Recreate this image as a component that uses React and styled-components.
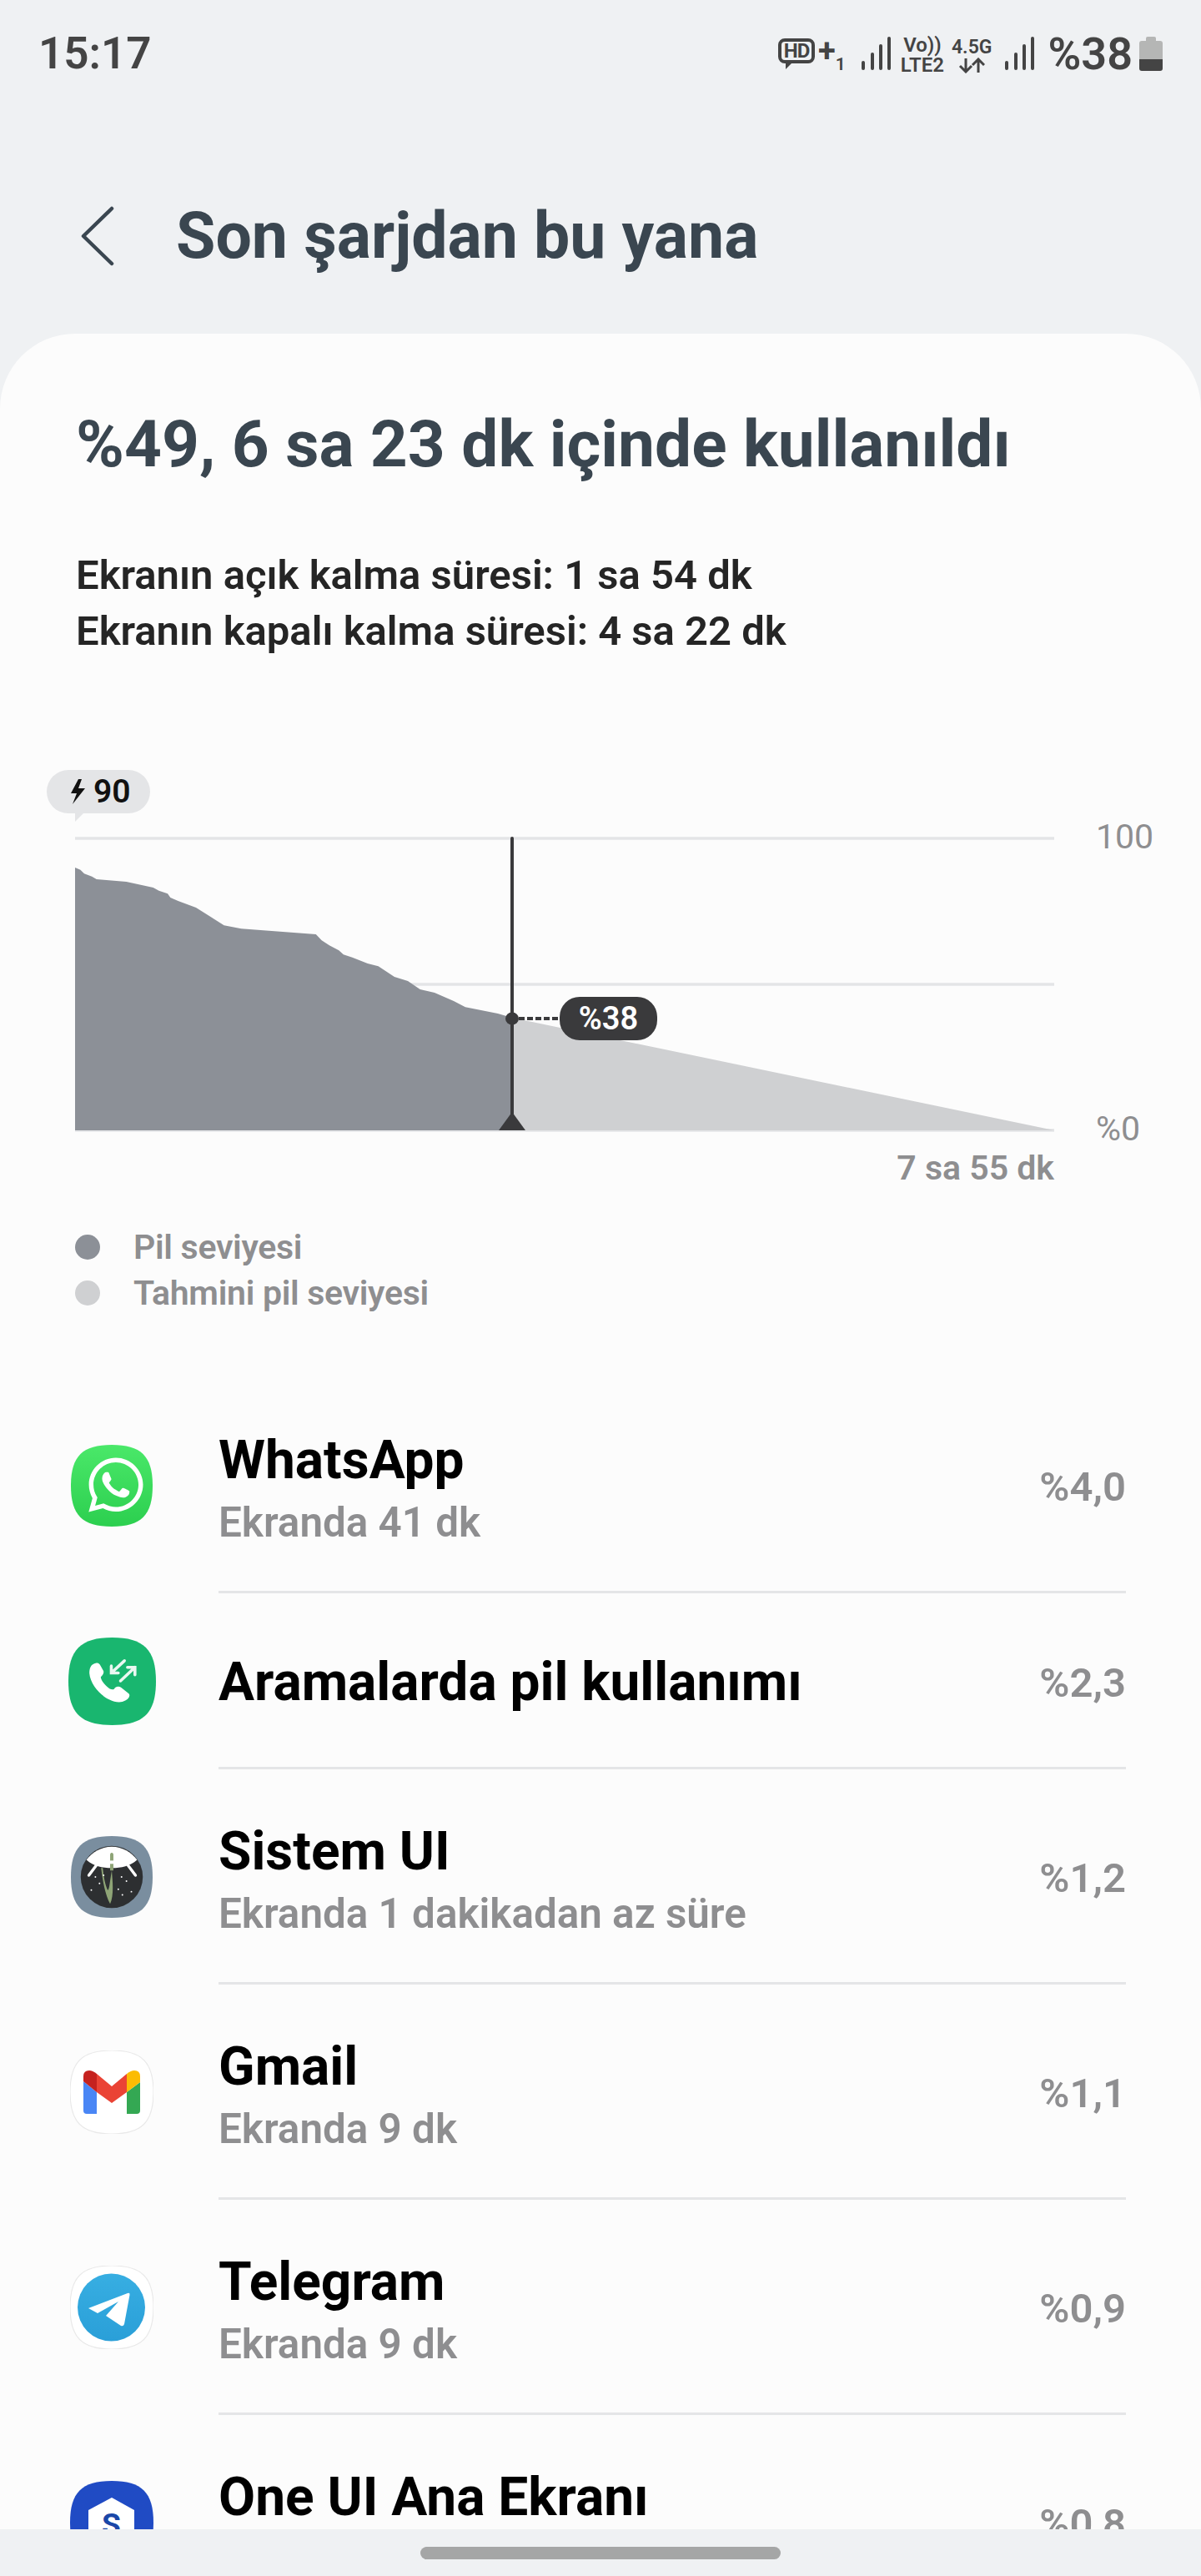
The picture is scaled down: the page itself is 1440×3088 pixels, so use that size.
import React from 'react';
import styled, { createGlobalStyle } from 'styled-components';
import { FaWhatsapp } from 'react-icons/fa';

const GlobalStyle = createGlobalStyle`
  html, body {
    margin: 0;
    padding: 0;
    background: #eff1f3;
  }
  * {
    box-sizing: border-box;
  }
`;

const Page = styled.div`
  position: relative;
  width: 1440px;
  height: 3088px;
  overflow: hidden;
  background: #eff1f3;
  font-family: Roboto, "Liberation Sans", sans-serif;
`;

const StatusBar = styled.div`
  display: flex;
  align-items: center;
  justify-content: space-between;
  height: 128px;
  padding: 0 46px 0 46px;
  color: #444;
`;

const Clock = styled.span`
  font-size: 53px;
  font-weight: 600;
`;

const StatusIcons = styled.div`
  display: flex;
  align-items: center;
`;

const HdBadge = styled.span`
  position: relative;
  display: block;
  width: 44px;
  height: 30px;
  margin-top: -6px;
  border: 4px solid #444;
  border-radius: 8px;
  font-size: 24px;
  font-weight: 700;
  line-height: 22px;
  text-align: center;
  letter-spacing: -1px;
  &::after {
    content: '';
    position: absolute;
    left: 5px;
    top: 24px;
    border-top: 9px solid #444;
    border-right: 9px solid transparent;
  }
`;

const HdPlus = styled.span`
  margin: -6px 0 0 4px;
  font-size: 38px;
  font-weight: 700;
  line-height: 30px;
`;

const SimNumber = styled.span`
  margin: 26px 19px 0 0;
  font-size: 21px;
  font-weight: 600;
  line-height: 22px;
`;

const StatusStack = styled.span`
  display: flex;
  flex-direction: column;
  align-items: center;
  margin: 4px 0 0 ${p => p.$gap}px;
  font-size: ${p => p.$size}px;
  font-weight: 600;
  line-height: 24px;
`;

const SignalGroup = styled.span`
  display: flex;
  margin-left: ${p => p.$gap}px;
`;

const BatteryText = styled.span`
  margin-left: 15px;
  font-size: 54px;
  font-weight: 600;
`;

const Header = styled.div`
  display: flex;
  align-items: center;
  height: 272px;
  padding: 38px 0 0 96px;
  color: #3a4650;
`;

const HeaderTitle = styled.h1`
  margin: 0 0 0 73px;
  font-size: 77px;
  font-weight: 700;
`;

const Panel = styled.div`
  padding-top: 88px;
  border-radius: 90px 90px 0 0;
  background: #fcfcfc;
`;

const Heading = styled.h2`
  margin: 0 0 0 91px;
  color: #3a4650;
  font-size: 78.4px;
  font-weight: 700;
  line-height: 88px;
`;

const Stats = styled.div`
  margin: 80px 0 0 91px;
  color: #252525;
  font-size: 49px;
  font-weight: 600;
  line-height: 67px;
`;

const ChargeBubble = styled.div`
  position: relative;
  display: flex;
  align-items: center;
  gap: 10px;
  width: 124px;
  height: 52px;
  margin: 133px 0 0 56px;
  padding-left: 29px;
  border-radius: 26px;
  background: #e4e5e7;
  color: #111;
  font-size: 39px;
  font-weight: 600;
  &::after {
    content: '';
    position: absolute;
    left: 34px;
    top: 52px;
    border-top: 10px solid #e4e5e7;
    border-right: 10px solid transparent;
  }
`;

const ChartRow = styled.div`
  position: relative;
  display: flex;
  align-items: stretch;
  margin: 27px 0 0 90px;
`;

const ChartSvg = styled.svg`
  display: block;
  width: 1174px;
  height: 356px;
`;

const AxisColumn = styled.div`
  display: flex;
  flex-direction: column;
  justify-content: space-between;
  margin: -14px 0 -10px 50px;
  color: #8e8e90;
  font-size: 41px;
  line-height: 30px;
`;

const LevelPill = styled.div`
  position: absolute;
  left: 581px;
  top: 193px;
  width: 117px;
  height: 52px;
  border-radius: 24px;
  background: #3a3a3c;
  color: #fff;
  font-size: 38px;
  font-weight: 600;
  line-height: 52px;
  text-align: center;
`;

const Duration = styled.div`
  margin-top: 22px;
  padding-right: 176px;
  color: #8e8e90;
  font-size: 41px;
  font-weight: 600;
  line-height: 40px;
  text-align: right;
`;

const Legend = styled.div`
  margin: 47px 0 0 90px;
`;

const LegendRow = styled.div`
  display: flex;
  align-items: center;
  height: 55px;
  color: #8e8e90;
  font-size: 41px;
  font-weight: 600;
  letter-spacing: -0.3px;
`;

const LegendDot = styled.span`
  width: 30px;
  height: 30px;
  margin-right: 40px;
  border-radius: 50%;
  background: ${p => p.$color};
`;

const AppList = styled.div`
  margin-top: 75px;
`;

const AppRow = styled.div`
  display: flex;
  height: ${p => (p.$single ? 211 : 258)}px;
  padding-right: 90px;
`;

const IconCell = styled.div`
  display: flex;
  flex: none;
  align-items: center;
  justify-content: center;
  width: 262px;
  padding-left: 6px;
`;

const AppIcon = styled.svg`
  display: block;
  width: ${p => p.$size}px;
  height: ${p => p.$size}px;
`;

const RowBody = styled.div`
  display: flex;
  flex: 1;
  align-items: center;
  justify-content: space-between;
  border-bottom: 3px solid #e4e5e7;
`;

const RowText = styled.div`
  padding-top: ${p => (p.$single ? 5 : 16)}px;
`;

const AppName = styled.div`
  color: #000;
  font-size: 64px;
  font-weight: 700;
  line-height: 75px;
`;

const AppDetail = styled.div`
  height: 75px;
  color: #8e8e90;
  font-size: 49.4px;
  font-weight: 650;
  line-height: 75px;
`;

const AppShare = styled.div`
  padding-top: 6px;
  color: #8e8e90;
  font-size: 49px;
  font-weight: 650;
`;

const NavBar = styled.div`
  position: absolute;
  left: 0;
  right: 0;
  bottom: 0;
  display: flex;
  align-items: center;
  justify-content: center;
  height: 56px;
  background: #eff1f3;
`;

const NavHandle = styled.div`
  width: 432px;
  height: 15px;
  border-radius: 8px;
  background: #a5a6a6;
`;

const SQUIRCLE = 'M50 0C86 0 100 14 100 50S86 100 50 100 0 86 0 50 14 0 50 0Z';

const CURVE = [
  [90, 1040], [96.4, 1042.7], [101, 1047.3], [110.2, 1050.7], [115.7, 1054], [151.5, 1057],
  [183.7, 1064], [190.5, 1067.7], [201, 1071.3], [204.3, 1076], [213.5, 1080], [235, 1088],
  [252.5, 1099], [268.6, 1109.3], [289.3, 1113.3], [378.8, 1120], [385.7, 1127.3], [394.9, 1133.3],
  [406.3, 1139.3], [411.8, 1144.3], [422.4, 1147.7], [440.8, 1155], [453.6, 1158.3], [472.9, 1171],
  [489, 1176], [503.7, 1186], [521, 1190], [544, 1200], [557.9, 1207.3], [596.9, 1215], [614, 1220],
];

const SignalBars = () => (
  <svg width="36" height="40" viewBox="0 0 36 40">
    <g stroke="#444" strokeWidth="4" strokeLinecap="round">
      <path d="M2 31V38" />
      <path d="M13 21V38" />
      <path d="M23 11V38" />
      <path d="M33 2V38" />
    </g>
  </svg>
);

const BatteryIcon = () => (
  <svg width="28" height="42" viewBox="0 0 28 42" style={{ marginLeft: 8 }}>
    <path d="M8 3Q8 1 10 1H18Q20 1 20 3V6H25Q28 6 28 9V28H0V9Q0 6 3 6H8Z" fill="#b5b6b5" />
    <path d="M0 28H28V39Q28 42 25 42H3Q0 42 0 39Z" fill="#444" />
  </svg>
);

const ArrowPair = () => (
  <svg width="32" height="19" viewBox="0 0 32 19" fill="none" stroke="#444" strokeWidth="3">
    <path d="M9 1V17M2 10L9 17L16 10" />
    <path d="M24 18V2M17 9L24 2L31 9" />
  </svg>
);

const WhatsAppIcon = () => (
  <AppIcon $size={98} viewBox="0 0 100 100">
    <defs>
      <linearGradient id="wa" x1="0" y1="0" x2="0" y2="1">
        <stop offset="0" stopColor="#4ae869" />
        <stop offset="1" stopColor="#2ccf4f" />
      </linearGradient>
    </defs>
    <path d={SQUIRCLE} fill="url(#wa)" />
    <FaWhatsapp x="17" y="11" size="76" color="#fff" />
  </AppIcon>
);

const CallIcon = () => (
  <AppIcon $size={105} viewBox="0 0 100 100">
    <path d={SQUIRCLE} fill="#19b66f" />
    <path
      d="M32 29C25 30 24 36 24 41C25 53 36 66 47 71C53 74 60 75 65 72C69 70 71 66 69 64L60 57C57 55 54 56 52 59C50 60 47 59 44 56C40 52 37 48 37 45C39 43 41 41 40 38L36 31C35 29 33 29 32 29Z"
      fill="#fff"
    />
    <g fill="none" stroke="#eaf8f1" strokeWidth="3.4" strokeLinecap="round">
      <path d="M64 26.5L49.5 40M49 32.5V40.5H57" />
      <path d="M59.5 49.5L76 34M67.5 34H76V42.5" />
    </g>
  </AppIcon>
);

const SystemUiIcon = () => (
  <AppIcon $size={98} viewBox="0 0 100 100">
    <path d={SQUIRCLE} fill="#7a8e9f" />
    <circle cx="50" cy="50" r="38" fill="#2d2f31" />
    <path d="M19 29C26 20 37 13 50 13C63 13 74 20 81 29C72 37 62 39 50 39C38 39 28 37 19 29Z" fill="#fff" />
    <path d="M31 36L22 48M70 36L79 48" stroke="#fff" strokeWidth="3.5" strokeLinecap="round" />
    <path d="M37 39C39 55 42 72 48 83C53 72 51 55 50 42C47 60 47 66 45 66C42 60 40 50 39 39Z" fill="#8ea476" />
    <path d="M48 42V22Q50 19 52 22V42Z" fill="#8ea476" />
    <rect x="48" y="30" width="4" height="4" fill="#fff" />
    <g fill="#fff">
      <circle cx="30" cy="50" r="1" />
      <circle cx="40" cy="48" r="1" />
      <circle cx="25" cy="66" r="1" />
      <circle cx="35" cy="58" r="1" />
      <circle cx="58" cy="65" r="1" />
      <circle cx="68" cy="55" r="1" />
      <circle cx="63" cy="72" r="1" />
      <circle cx="62" cy="50" r="1" />
      <circle cx="74" cy="68" r="1" />
    </g>
  </AppIcon>
);

const GmailIcon = () => (
  <AppIcon $size={100} viewBox="0 0 100 100">
    <path d={SQUIRCLE} fill="#fff" stroke="#e9e9e9" strokeWidth="1.2" />
    <path d="M16 37L32 50V76H20Q16 76 16 72Z" fill="#4a86f5" />
    <path d="M16 37V31Q16 24 23 24Q27 24 32 28V50Z" fill="#c5221f" />
    <path d="M32 28L50 43L68 28V50L50 63L32 50Z" fill="#ea4335" />
    <path d="M68 50L84 38V72Q84 76 80 76H68Z" fill="#34a853" />
    <path d="M68 28Q73 24 77 24Q84 24 84 31V38L68 50Z" fill="#fbbc04" />
  </AppIcon>
);

const TelegramIcon = () => (
  <AppIcon $size={100} viewBox="0 0 100 100">
    <defs>
      <linearGradient id="tg" x1="0" y1="0" x2="0" y2="1">
        <stop offset="0" stopColor="#37aee2" />
        <stop offset="1" stopColor="#2a9fd8" />
      </linearGradient>
    </defs>
    <path d={SQUIRCLE} fill="#fff" stroke="#e9e9e9" strokeWidth="1.2" />
    <circle cx="49.5" cy="50" r="40.5" fill="url(#tg)" />
    <path d="M22 51L69 33Q72 32 71.5 35L65 70Q64 73 61 72L43 60L58 43L33 57Z" fill="#fff" />
  </AppIcon>
);

const OneUiIcon = () => (
  <AppIcon $size={100} viewBox="0 0 100 100">
    <path d={SQUIRCLE} fill="#204bc4" />
    <path d="M50 20L77 35V85H22V35Z" fill="#fff" />
    <text x="49.5" y="65" fontFamily="Roboto, sans-serif" fontSize="37" fontWeight="700" fill="#1a47a8" textAnchor="middle">S</text>
  </AppIcon>
);

// the last row's second line sits under the nav bar, so it stays empty
const APPS = [
  { name: 'WhatsApp', detail: 'Ekranda 41 dk', share: '%4,0', Icon: WhatsAppIcon },
  { name: 'Aramalarda pil kullanımı', share: '%2,3', Icon: CallIcon, single: true },
  { name: 'Sistem UI', detail: 'Ekranda 1 dakikadan az süre', share: '%1,2', Icon: SystemUiIcon },
  { name: 'Gmail', detail: 'Ekranda 9 dk', share: '%1,1', Icon: GmailIcon },
  { name: 'Telegram', detail: 'Ekranda 9 dk', share: '%0,9', Icon: TelegramIcon },
  { name: 'One UI Ana Ekranı', share: '%0,8', Icon: OneUiIcon },
];

const BatteryChart = () => {
  const line = CURVE.map(([x, y]) => `${x} ${y}`).join(' L');
  return (
    <ChartSvg viewBox="90 1002 1174 356">
      <path d="M90 1005H1264M90 1180H1264M90 1355H1264" stroke="#e4e5e7" strokeWidth="3.5" fill="none" />
      <path d={`M614 1220L1264 1355H614Z`} fill="#cfd0d2" />
      <path d={`M${line}L614 1355H90Z`} fill="#8c9097" />
      <path d="M614 1005V1340" stroke="#3a3a3c" strokeWidth="4" strokeLinecap="round" />
      <ellipse cx="614" cy="1221" rx="8" ry="7.5" fill="#3a3a3c" />
      <path d="M622 1221H671" stroke="#3a3a3c" strokeWidth="4" strokeDasharray="7 3" />
      <path d="M614 1333L630 1355H598Z" fill="#3a3a3c" />
    </ChartSvg>
  );
};

export default function App() {
  return (
    <Page>
      <GlobalStyle />
      <StatusBar>
        <Clock>15:17</Clock>
        <StatusIcons>
          <HdBadge>HD</HdBadge>
          <HdPlus>+</HdPlus>
          <SimNumber>1</SimNumber>
          <SignalGroup $gap={0}>
            <SignalBars />
          </SignalGroup>
          <StatusStack $gap={11} $size={24}>
            <span>Vo))</span>
            <span>LTE2</span>
          </StatusStack>
          <StatusStack $gap={9} $size={23}>
            <span>4.5G</span>
            <ArrowPair />
          </StatusStack>
          <SignalGroup $gap={16}>
            <SignalBars />
          </SignalGroup>
          <BatteryText>%38</BatteryText>
          <BatteryIcon />
        </StatusIcons>
      </StatusBar>
      <Header>
        <svg width="42" height="72" viewBox="0 0 42 72" fill="none" stroke="#3a4650" strokeWidth="4.5" strokeLinecap="round" strokeLinejoin="round">
          <path d="M38 3L4 36L38 69" />
        </svg>
        <HeaderTitle>Son şarjdan bu yana</HeaderTitle>
      </Header>
      <Panel>
        <Heading>%49, 6 sa 23 dk içinde kullanıldı</Heading>
        <Stats>
          <div>Ekranın açık kalma süresi: 1 sa 54 dk</div>
          <div>Ekranın kapalı kalma süresi: 4 sa 22 dk</div>
        </Stats>
        <ChargeBubble>
          <svg width="17" height="30" viewBox="0 0 17 30">
            <path d="M9 0L0 17H7L2 30L17 11H9L13 0Z" fill="#111" />
          </svg>
          90
        </ChargeBubble>
        <ChartRow>
          <BatteryChart />
          <AxisColumn>
            <span>100</span>
            <span>%0</span>
          </AxisColumn>
          <LevelPill>%38</LevelPill>
        </ChartRow>
        <Duration>7 sa 55 dk</Duration>
        <Legend>
          <LegendRow>
            <LegendDot $color="#8c9097" />
            Pil seviyesi
          </LegendRow>
          <LegendRow>
            <LegendDot $color="#cfd0d2" />
            Tahmini pil seviyesi
          </LegendRow>
        </Legend>
        <AppList>
          {APPS.map(({ name, detail, share, Icon, single }) => (
            <AppRow key={name} $single={single}>
              <IconCell>
                <Icon />
              </IconCell>
              <RowBody>
                <RowText $single={single}>
                  <AppName>{name}</AppName>
                  {!single && <AppDetail>{detail}</AppDetail>}
                </RowText>
                <AppShare>{share}</AppShare>
              </RowBody>
            </AppRow>
          ))}
        </AppList>
      </Panel>
      <NavBar>
        <NavHandle />
      </NavBar>
    </Page>
  );
}
